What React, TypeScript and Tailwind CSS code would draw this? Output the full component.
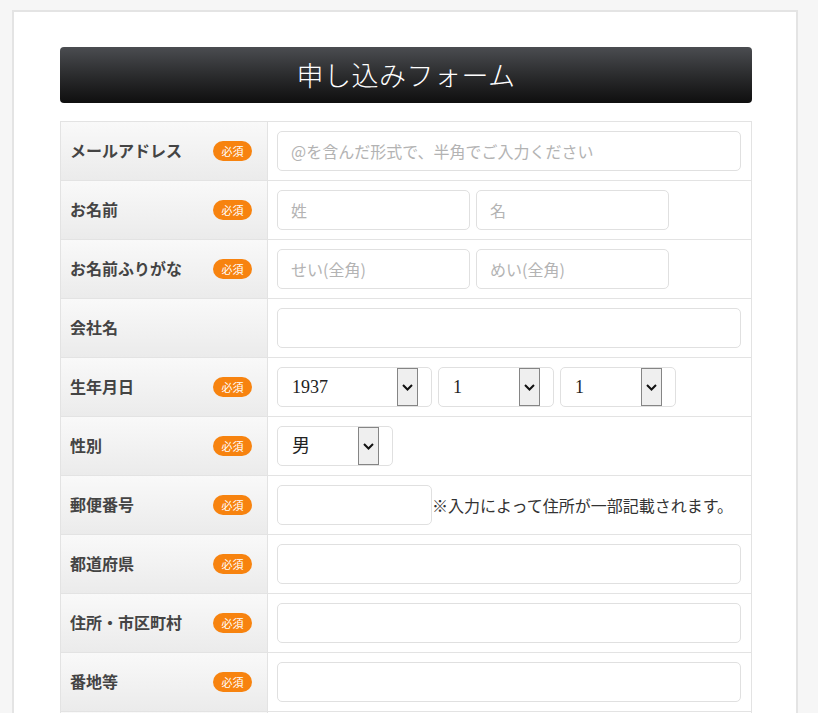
import React from "react";

const font = { fontFamily: '"Noto Sans CJK JP", "Noto Sans", sans-serif' };

function Badge() {
  return (
    <span className="flex h-5 w-[39px] shrink-0 items-center justify-center rounded-full bg-[#f7830f] text-[11px] leading-none text-white">
      必須
    </span>
  );
}

function Row({
  label,
  required = true,
  children,
}: {
  label: string;
  required?: boolean;
  children?: React.ReactNode;
}) {
  return (
    <div className="flex h-[59px] border-b border-[#e3e3e3]">
      <div className="flex w-[207px] shrink-0 items-center justify-between border-r border-[#e3e3e3] bg-gradient-to-b from-[#f9f9f9] to-[#ebebeb] pl-[9px] pr-[15px]">
        <span className="-mt-[2px] text-[16px] font-bold text-[#444]">{label}</span>
        {required && <Badge />}
      </div>
      <div className="flex flex-1 items-center gap-[6px] pl-[9px] pr-[10px]">
        {children}
      </div>
    </div>
  );
}

function TextInput({
  placeholder,
  className = "flex-1",
}: {
  placeholder?: string;
  className?: string;
}) {
  return (
    <input
      type="text"
      placeholder={placeholder}
      className={`h-10 rounded-[5px] border border-[#e0e0e0] bg-white px-[13px] text-[16px] text-[#333] outline-none placeholder:text-[#b3b3b3] ${className}`}
    />
  );
}

function FakeSelect({ value, width }: { value: string; width: string }) {
  return (
    <div
      className={`relative flex h-10 shrink-0 items-center rounded-[5px] border border-[#e0e0e0] bg-white pl-[14px] ${width}`}
    >
      <span
        className="text-[18px] text-[#222]"
        style={{ fontFamily: '"Liberation Serif", "Noto Sans CJK JP", serif' }}
      >
        {value}
      </span>
      <span className="absolute right-[13px] top-0 flex h-[38px] w-[21px] items-center justify-center border border-[#858585] bg-[#efefef]">
        <svg width="11" height="7" viewBox="0 0 11 7" fill="none">
          <path d="M1 1l4.5 4.5L10 1" stroke="#111" strokeWidth="2" />
        </svg>
      </span>
    </div>
  );
}

export default function App() {
  return (
    <div className="min-h-[713px] bg-[#f6f6f6] pl-[12px] pt-[10px]" style={font}>
      <div className="w-[786px] border-2 border-b-0 border-[#e4e4e4] bg-white pb-10 pl-[46px] pt-[35px]">
        <div className="flex h-[56px] w-[692px] items-center justify-center rounded-[4px] bg-gradient-to-b from-[#4b4d51] to-[#0f0f0f]">
          <h1 className="text-[27px] font-light tracking-[0.5px] text-white">
            申し込みフォーム
          </h1>
        </div>

        <div className="mt-[18px] w-[692px] border border-b-0 border-[#e3e3e3]">
          <Row label="メールアドレス">
            <TextInput placeholder="@を含んだ形式で、半角でご入力ください" />
          </Row>
          <Row label="お名前">
            <TextInput placeholder="姓" className="w-[193px]" />
            <TextInput placeholder="名" className="w-[193px]" />
          </Row>
          <Row label="お名前ふりがな">
            <TextInput placeholder="せい(全角)" className="w-[193px]" />
            <TextInput placeholder="めい(全角)" className="w-[193px]" />
          </Row>
          <Row label="会社名" required={false}>
            <TextInput />
          </Row>
          <Row label="生年月日">
            <FakeSelect value="1937" width="w-[155px]" />
            <FakeSelect value="1" width="w-[116px]" />
            <FakeSelect value="1" width="w-[116px]" />
          </Row>
          <Row label="性別">
            <FakeSelect value="男" width="w-[116px]" />
          </Row>
          <Row label="郵便番号">
            <div className="flex items-center">
              <TextInput className="w-[155px]" />
              <span className="text-[16px] text-[#333]">
                ※入力によって住所が一部記載されます。
              </span>
            </div>
          </Row>
          <Row label="都道府県">
            <TextInput />
          </Row>
          <Row label="住所・市区町村">
            <TextInput />
          </Row>
          <Row label="番地等">
            <TextInput />
          </Row>
          <Row label="" required={false} />
        </div>
      </div>
    </div>
  );
}
